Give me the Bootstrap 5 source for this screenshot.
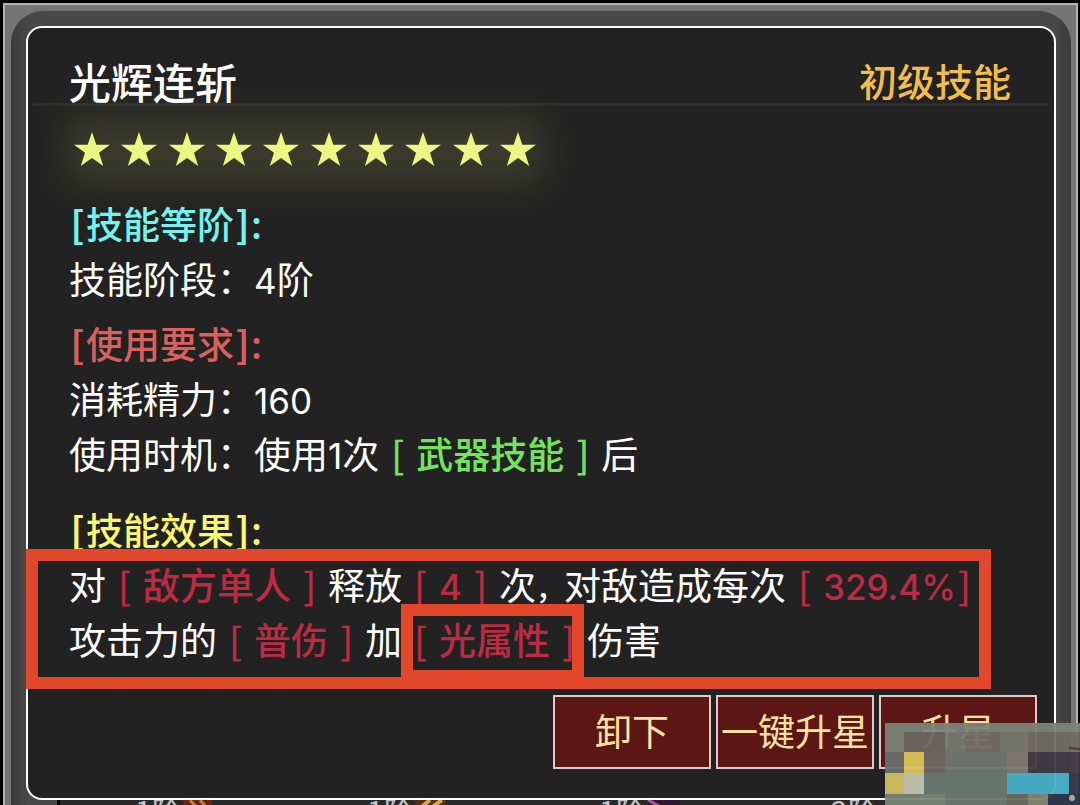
<!DOCTYPE html>
<html lang="zh-CN">
<head>
<meta charset="utf-8">
<meta name="viewport" content="width=device-width, initial-scale=1">
<title>光辉连斩</title>
<link href="https://cdn.jsdelivr.net/npm/bootstrap@5.3.0/dist/css/bootstrap.min.css" rel="stylesheet">
<style>
  body { background: #000; color: #fff; font-family: "Noto Sans CJK SC", sans-serif; font-size: 37px; line-height: 55px; }
  .window-frame { margin: 3px 2px 0 3px; padding: 6px 5px 0 6px; background: #747474; border: 2px solid #b4b4b4; border-bottom: 0; }
  .window-shade { padding: 15px 15px 0; background: linear-gradient(90deg, #3a3a3a, #484848 16px, #484848 calc(100% - 16px), #3a3a3a); border-radius: 32px 32px 0 0; }
  .skill-panel { background: #222; border: 2px solid #fff; border-radius: 16px; padding-bottom: 29px; }
  .skill-head { margin: 0 5px; padding: 35px 38px 4px 36px; border-bottom: 3px solid #2d2d2f; line-height: 36px; }
  .skill-name { font-size: 42px; font-weight: 500; line-height: 36px; }
  .skill-rank { font-size: 38px; line-height: 34px; font-weight: 500; color: #f3bd4e; }
  .skill-body { padding: 26px 41px 0; }
  .star-row { width: 462px; margin: 0 0 30px 5px; }
  .star-row::before { content: ""; position: absolute; inset: -16px -8px -18px; background: #e6f06e; opacity: .12; filter: blur(18px); }
  .star-row svg { display: block; width: 36px; height: 34px; position: relative; }
  .group-title { font-size: 37px; line-height: 55px; font-weight: 500; }
  .group-title i { display: inline-block; width: 17px; font-style: normal; font-weight: 700; text-align: center; }
  .tier { color: #74f3ee; } .need { color: #d9605c; } .effect { color: #f9f871; }
  .token { font-weight: 500; color: #bd2b42; }
  .token i { display: inline-block; width: 37px; font-style: normal; text-align: center; }
  .token i.tight { width: 17px; }
  .token.green { color: #73e35f; }
  .num { font-family: Inter, sans-serif; font-size: 35px; line-height: 1; }
  .comma { font-size: 28px; line-height: 1; font-weight: 500; }
  .group-gap { margin-bottom: 10px; }
  .group-gap-lg { margin-bottom: 21px; }
  .effect-box { width: fit-content; }
  .outline-all, .outline-one { position: absolute; border: 12px solid #e2472b; pointer-events: none; }
  .outline-all { inset: -8px -18px -22px -43px; }
  .outline-one { inset: -8px 3px -16px -1px; }
  .skill-actions { padding: 0 17px; gap: 5px; margin-top: 28px; }
  .skill-btn { width: 158px; height: 74px; padding: 0 0 4px; color: #ffe3a3; background: #5c1614; border: 2px solid #dccbc8; border-radius: 0; font-size: 37px; line-height: 64px; white-space: nowrap; }
  .skill-btn:hover { color: #fff; background: #741f1b; border-color: #fff; }
  .slot-row { margin: 0 31px; height: 40px; background: #292929; border-left: 3px solid #000; padding-left: 75px; font-size: 30px; line-height: 20px; color: #c4c4c4; }
  .slot { width: 232px; flex: none; }
  .slot svg { width: 36px; height: 30px; }
  .pixel-mark { position: fixed; right: 0; bottom: 0; opacity: .95; display: block; }
</style>
</head>
<body class="vh-100 overflow-hidden">
<div class="window-frame">
  <div class="window-shade">
    <main class="skill-panel">
      <header class="skill-head d-flex justify-content-between">
        <h1 class="skill-name mb-0">光辉连斩</h1>
        <span class="skill-rank">初级技能</span>
      </header>
      <div class="skill-body">
        <div class="star-row position-relative d-flex justify-content-between" id="stars" role="img" aria-label="10星"></div>
        <section class="group-gap">
          <h2 class="group-title tier mb-0"><i>[</i>技能等阶<i>]</i>:</h2>
          <p class="mb-0">技能阶段：<span class="num">4</span>阶</p>
        </section>
        <section class="group-gap-lg">
          <h2 class="group-title need mb-0"><i>[</i>使用要求<i>]</i>:</h2>
          <p class="mb-0">消耗精力：<span class="num">160</span></p>
          <p class="mb-0">使用时机：使用<span class="num">1</span>次<span class="token green"><i>[</i>武器技能<i>]</i></span>后</p>
        </section>
        <section>
          <h2 class="group-title effect mb-0"><i>[</i>技能效果<i>]</i>:</h2>
          <div class="effect-box position-relative text-nowrap">
            <p class="mb-0">对<span class="token"><i>[</i>敌方单人<i>]</i></span>释放<span class="token"><i>[</i><span class="num">4</span><i>]</i></span>次<span class="comma">，</span>对敌造成每次<span class="token"><i>[</i><span class="num">329.4%</span><i class="tight">]</i></span></p>
            <p class="mb-0">攻击力的<span class="token"><i>[</i>普伤<i>]</i></span>加<span class="token position-relative"><i>[</i>光属性<i>]</i><span class="outline-one"></span></span>伤害</p>
            <div class="outline-all"></div>
          </div>
        </section>
      </div>
      <div class="skill-actions d-flex justify-content-end">
        <button type="button" class="btn skill-btn">卸下</button>
        <button type="button" class="btn skill-btn">一键升星</button>
        <button type="button" class="btn skill-btn">升星</button>
      </div>
    </main>
    <div class="slot-row d-flex overflow-hidden">
      <div class="slot d-flex">1阶<svg viewBox="0 0 36 30"><path d="M0 0H30V30H12Z" fill="#6b2413"/><path d="M8 0L24 18M18 0L30 14" stroke="#c9812f" stroke-width="3"/></svg></div>
      <div class="slot d-flex">1阶<svg viewBox="0 0 36 30"><path d="M0 0H32V30H10Z" fill="#5a2a12"/><path d="M4 10L16 0M14 10L28 0" stroke="#d7a83a" stroke-width="4"/></svg></div>
      <div class="slot d-flex">1阶<svg viewBox="0 0 36 30"><path d="M0 0H34V30H10Z" fill="#31182f"/><path d="M2 0L20 10" stroke="#a05a9a" stroke-width="3"/></svg></div>
      <div class="slot d-flex">2阶</div>
    </div>
  </div>
</div>
<svg class="pixel-mark" width="195" height="82" viewBox="0 0 195 82" shape-rendering="crispEdges" aria-hidden="true">
  <path fill="#7c8478" d="M0 0H195V82H0Z"/>
  <path fill="#696862" d="M19 9H60V29H19Z"/><path fill="#737a70" d="M60 9H195V29H60Z"/><path fill="#6f6d66" d="M80 9H115V29H80ZM143 9H195V29H143Z"/>
  <path fill="#6b6f6b" d="M0 29H19V50H0Z"/><path fill="#dcc458" d="M19 29H39V50H19Z"/><path fill="#6e6965" d="M39 29H60V50H39Z"/>
  <path fill="#6e7971" d="M60 29H122V82H60Z"/><path fill="#807b74" d="M122 29H143V50H122Z"/><path fill="#413b46" d="M143 29H195V50H143Z"/>
  <path fill="#d2c061" d="M0 50H19V71H0Z"/><path fill="#c5c6b3" d="M19 50H39V71H19Z"/><path fill="#6c7b74" d="M39 50H122V71H39Z"/>
  <path fill="#48b0cb" d="M122 50H184V71H122Z"/><path fill="#34364a" d="M184 50H195V82H184Z"/>
  <path fill="#6a6c64" d="M122 71H143V82H122Z"/><path fill="#82846f" d="M143 71H163V82H143Z"/><path fill="#30344b" d="M163 71H195V82H163Z"/>
  <path fill="none" stroke="#53323a" stroke-width="2" shape-rendering="auto" d="M184 25L195 26M187 30L195 38"/>
  <circle cx="187" cy="75" r="3" fill="#aab29e" shape-rendering="auto"/>
</svg>
<script src="https://cdn.jsdelivr.net/npm/bootstrap@5.3.0/dist/js/bootstrap.bundle.min.js"></script>
<script>
  const star = '<svg viewBox="0 0 36 34"><path fill="#eaf783" d="M18 0L22.3 12.7H36L25 20.8L29.2 34L18 26L6.8 34L11 20.8L0 12.7H13.7Z"/></svg>';
  document.getElementById('stars').innerHTML = star.repeat(10);
</script>
</body>
</html>
